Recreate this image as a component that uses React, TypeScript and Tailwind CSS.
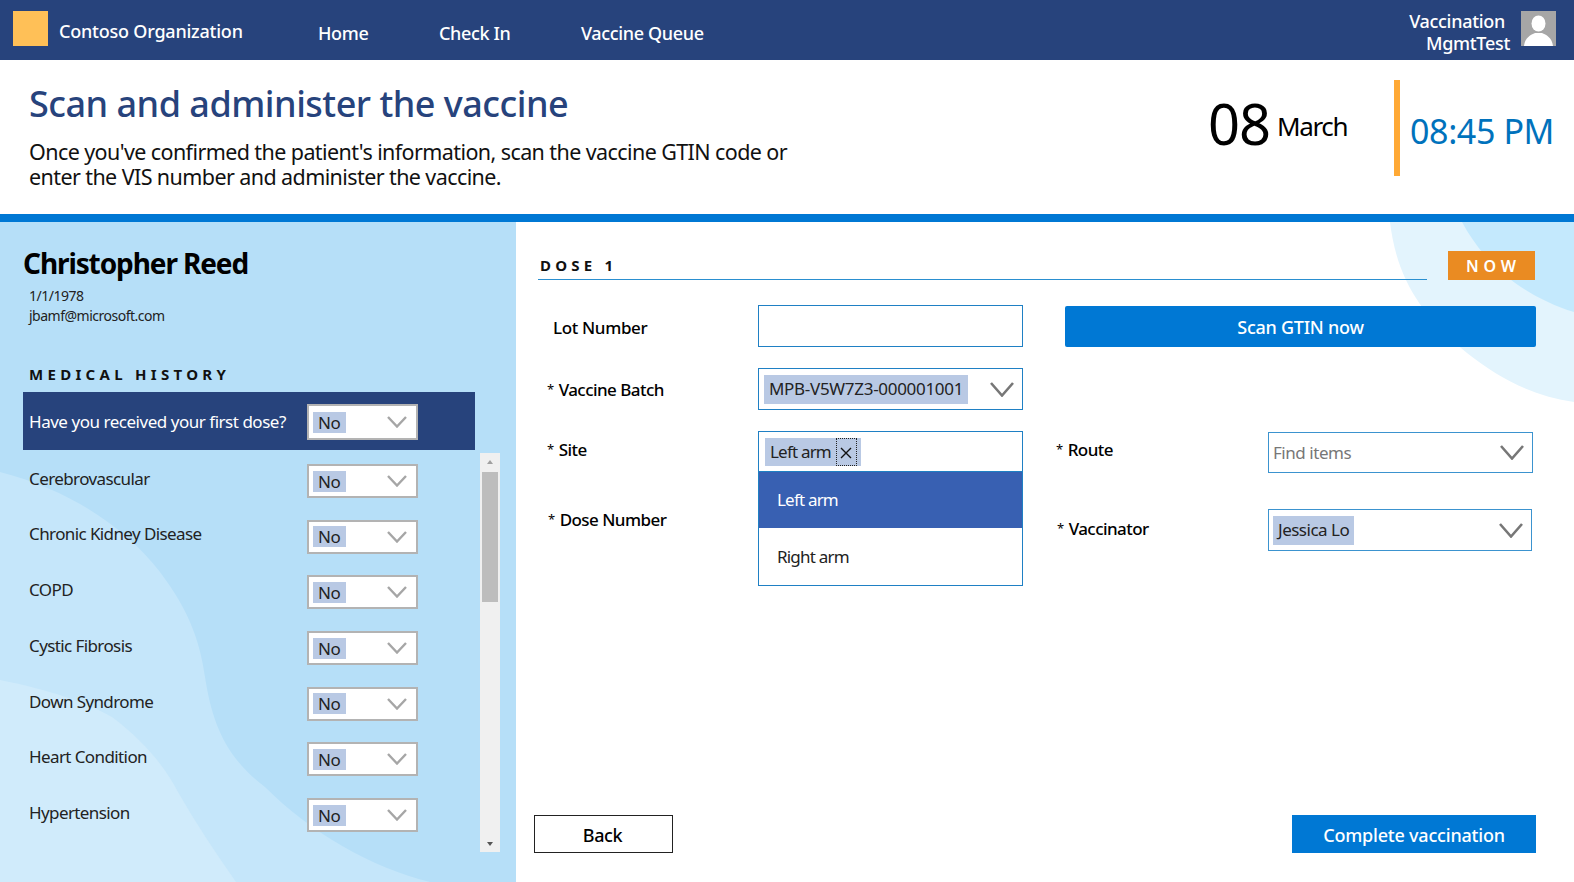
import React from "react";

function Chevron({ className = "", color = "#a6a6a6", w = 20, h = 12, sw = 2.4 }: { className?: string; color?: string; w?: number; h?: number; sw?: number }) {
  return (
    <svg className={className} width={w} height={h} viewBox={`0 0 ${w} ${h}`} fill="none">
      <polyline points={`1,1 ${w / 2},${h - 1.5} ${w - 1},1`} stroke={color} strokeWidth={sw} />
    </svg>
  );
}

function NoSelect({ rowH = "h-[34px]" }: { rowH?: string }) {
  return (
    <div className={`w-[111px] ${rowH} shrink-0 bg-white border-2 border-[#b3b3b3] flex items-center pl-[4px] pr-[9px] justify-between`}>
      <span className="bg-[#b9c9e4] h-[21px] w-[33px] pl-[5px] flex items-center text-[17px] text-[#222] leading-none tracking-[-0.3px]">No</span>
      <Chevron />
    </div>
  );
}

function Field({ label, className = "" }: { label: string; className?: string }) {
  return (
    <div className={`text-[17px] font-medium text-black leading-none tracking-[-0.55px] ${className}`}>
      <span className="text-[13px] font-normal relative -top-[2px] mr-[5px]">*</span>
      {label}
    </div>
  );
}

const rows = ["Cerebrovascular", "Chronic Kidney Disease", "COPD", "Cystic Fibrosis", "Down Syndrome", "Heart Condition", "Hypertension"];

export default function App() {
  return (
    <div className="w-full h-[882px] overflow-hidden flex flex-col bg-white text-black font-['Noto_Sans',sans-serif]">
      {/* top bar */}
      <header className="h-[60px] shrink-0 bg-[#27437c] flex items-center text-white">
        <div className="w-[35px] h-[35px] ml-[13px] -mt-[3px] bg-[#ffc057]" />
        <div className="ml-[11px] w-[259px] mt-[3px] text-[18px] font-medium tracking-[-0.22px]">Contoso Organization</div>
        <nav className="flex mt-[6px] text-[18px] font-medium tracking-[-0.35px]">
          <span className="w-[121px]">Home</span>
          <span className="w-[142px]">Check In</span>
          <span>Vaccine Queue</span>
        </nav>
        <div className="ml-auto mt-[4px] text-[18px] font-medium tracking-[-0.3px] leading-[22px] text-right">
          <div className="pr-[5px]">Vaccination</div>
          <div>MgmtTest</div>
        </div>
        <div className="w-[35px] h-[35px] ml-[11px] mr-[18px] -mt-[3px] bg-[#a6a6a6] overflow-hidden">
          <svg viewBox="0 0 35 35" width="35" height="35">
            <ellipse cx="17.5" cy="12.5" rx="7" ry="8" fill="#fff" />
            <path d="M3 35 C4 26 10 24 14 22 L21 22 C25 24 31 26 32 35 Z" fill="#fff" />
          </svg>
        </div>
      </header>

      {/* page heading */}
      <section className="h-[154px] shrink-0 flex">
        <div className="pl-[29px] w-[830px]">
          <h1 className="mt-[20px] h-[48px] text-[36px] leading-[48px] font-medium text-[#27437c] tracking-[-0.5px]">Scan and administer the vaccine</h1>
          <p className="mt-[11px] text-[21.5px] leading-[25px] tracking-[-0.59px] text-[#111]">
            Once you've confirmed the patient's information, scan the vaccine GTIN code or
            <br />
            enter the VIS number and administer the vaccine.
          </p>
        </div>
        <div className="ml-auto flex items-start mr-[20px]">
          <div className="flex items-center h-[96px] mt-[20px] -translate-y-[5px]">
            <span className="text-[56px] leading-none tracking-[-1px]">08</span>
            <span className="ml-[7px] mt-[5px] text-[26px] leading-none tracking-[-1.4px]">March</span>
          </div>
          <div className="w-[6px] h-[96px] mt-[20px] ml-[47px] bg-[#ffa935]" />
          <div className="ml-[10px] mt-[20px] h-[96px] flex items-center text-[34px] leading-none text-[#0072bc] tracking-[-0.4px] translate-y-[3px]">08:45 PM</div>
        </div>
      </section>

      <div className="h-[8px] shrink-0 bg-[#0078d4]" />

      {/* body */}
      <div className="flex-1 min-h-0 flex">
        <aside className="relative w-[516px] shrink-0 bg-[#b6dff8] pl-[23px] overflow-hidden">
          <svg className="absolute left-0 top-0" width="516" height="660" viewBox="0 0 516 660">
            <path d="M0 250 C70 268 125 305 160 350 C190 390 200 420 205 455 C212 500 225 535 265 565 C310 610 370 645 430 660 L0 660 Z" fill="#c5e6fa" />
            <path d="M0 458 C50 468 85 480 112 495 C145 520 165 545 178 570 C195 600 215 630 236 660 L0 660 Z" fill="#d0ebfb" />
          </svg>
          <div className="relative">
            <h2 className="mt-[22px] h-[38px] text-[28px] leading-[38px] font-bold tracking-[-1.1px]">Christopher Reed</h2>
            <div className="mt-[4px] pl-[6px] text-[14px] leading-[20px] tracking-[-0.5px] text-[#222]">
              <div>1/1/1978</div>
              <div>jbamf@microsoft.com</div>
            </div>
            <div className="mt-[38px] pl-[6px] h-[20px] text-[15px] leading-[20px] font-bold tracking-[4.3px] text-[#111]">MEDICAL HISTORY</div>
            <div className="mt-[8px] w-[452px] h-[58px] bg-[#27437c] flex items-center pl-[6px] pt-[2px]">
              <span className="w-[278px] text-[17px] text-white tracking-[-0.47px]">Have you received your first dose?</span>
              <NoSelect rowH="h-[36px]" />
            </div>
            <div className="flex mt-[3px]">
              <ul className="w-[457px] pt-[11px]">
                {rows.map((r) => (
                  <li key={r} className="h-[55.7px] flex pl-[6px]">
                    <span className="w-[278px] h-[29px] flex items-center text-[17px] text-[#222] tracking-[-0.6px]">{r}</span>
                    <NoSelect />
                  </li>
                ))}
              </ul>
              <div className="w-[20px] h-[399px] bg-[#f0f0f0] flex flex-col items-center pt-[7px] pb-[6px]">
                <div className="w-0 h-0 border-x-[3.5px] border-x-transparent border-b-[4px] border-b-[#a0a0a0]" />
                <div className="w-[16px] h-[130px] mt-[8px] bg-[#bdbdbd] mb-auto" />
                <div className="w-0 h-0 border-x-[3.5px] border-x-transparent border-t-[4px] border-t-[#555]" />
              </div>
            </div>
          </div>
        </aside>

        <main className="relative flex-1 min-w-0 flex flex-col overflow-hidden">
          <svg className="absolute left-0 top-0" width="1058" height="660" viewBox="0 0 1058 660">
            <path d="M874 0 C880 50 900 90 951 131 C985 158 1020 175 1058 180 L1058 0 Z" fill="#e3f4fd" />
            <path d="M946 0 C970 45 1010 75 1058 90 L1058 0 Z" fill="#c4e9fd" />
          </svg>
          <div className="relative flex-1 flex flex-col">
            <div className="mt-[29px] ml-[22px] mr-[39px] flex h-[29px]">
              <div className="w-[889px] h-[29px] border-b border-[#2a8fd0] pl-[2px] pt-[5px] text-[15px] leading-[18px] font-bold tracking-[4.2px] whitespace-pre text-[#111]">DOSE 1</div>
              <div className="ml-[21px] w-[87px] h-[29px] bg-[#ea8b22] text-white flex items-center justify-center text-[16px] font-semibold tracking-[0.3em] pl-[4px]">NOW</div>
            </div>

            <div className="mt-[25px] flex h-[42px] items-center">
              <div className="ml-[37px] w-[205px] mt-[2px] text-[17px] font-medium tracking-[-0.35px] leading-none">Lot Number</div>
              <div className="w-[265px] h-[42px] bg-white border border-[#1f80c4]" />
              <button className="ml-[42px] mt-[1px] w-[471px] h-[41px] rounded-[2px] bg-[#0078d4] text-white pt-[1px] text-[18px] font-medium tracking-[-0.25px]">Scan GTIN now</button>
            </div>

            <div className="mt-[21px] flex h-[42px] items-center">
              <Field label="Vaccine Batch" className="ml-[31px] w-[211px]" />
              <div className="w-[265px] h-[42px] bg-white border border-[#1f80c4] flex items-center justify-between pl-[5px] pr-[8px]">
                <span className="bg-[#b9c9e4] h-[29px] flex items-center px-[5px] text-[17px] tracking-[-0.3px] text-[#222]">MPB-V5W7Z3-000001001</span>
                <Chevron color="#777" w={24} h={15} sw={2.6} />
              </div>
            </div>

            <div className="mt-[21px] flex h-[41px] items-start">
              <Field label="Site" className="ml-[31px] w-[211px] mt-[10px]" />
              <div className="relative w-[265px] h-[41px] bg-white border border-[#1f80c4] flex items-center pl-[6px]">
                <span className="bg-[#b9c9e4] h-[28px] flex items-center pl-[5px] pr-[4px] text-[17px] tracking-[-0.8px] text-[#222]">
                  Left arm
                  <span className="ml-[5px] w-[21px] h-[28px] border border-dotted border-[#222] flex items-center justify-center">
                    <svg className="mt-[3px]" width="12" height="12" viewBox="0 0 12 12"><path d="M1 1 L11 11 M11 1 L1 11" stroke="#111" strokeWidth="1.4" /></svg>
                  </span>
                </span>
                <div className="absolute left-[-1px] top-[39px] w-[265px] h-[115px] bg-white border border-[#1f80c4] z-10">
                  <div className="h-[56px] bg-[#3860b2] text-white flex items-center pl-[18px] text-[17px] tracking-[-0.8px]">Left arm</div>
                  <div className="h-[57px] flex items-center pl-[18px] text-[17px] tracking-[-0.8px] text-[#222]">Right arm</div>
                </div>
              </div>
              <Field label="Route" className="ml-[33px] w-[212px] mt-[10px]" />
              <div className="w-[265px] h-[41px] mt-[1px] bg-white border border-[#3b93cf] flex items-center justify-between pl-[4px] pr-[8px]">
                <span className="text-[17px] tracking-[-0.45px] text-[#777]">Find items</span>
                <Chevron color="#777" w={24} h={15} sw={2.6} />
              </div>
            </div>

            <div className="mt-[37px] flex h-[42px] items-start">
              <Field label="Dose Number" className="ml-[32px] w-[210px] mt-[2px]" />
              <div className="w-[265px]" />
              <Field label="Vaccinator" className="ml-[34px] w-[211px] mt-[11px]" />
              <div className="w-[264px] h-[42px] bg-white border border-[#3b93cf] flex items-center justify-between pl-[4px] pr-[8px]">
                <span className="bg-[#b9c9e4] h-[29px] flex items-center px-[5px] text-[17px] tracking-[-0.5px] text-[#222]">Jessica Lo</span>
                <Chevron color="#777" w={24} h={15} sw={2.6} />
              </div>
            </div>

            <div className="mt-auto mb-[29px] ml-[18px] mr-[38px] flex justify-between">
              <button className="w-[139px] h-[38px] bg-white border border-[#222] pt-[2px] pr-[2px] text-[18px] font-medium tracking-[-0.4px]">Back</button>
              <button className="w-[244px] h-[38px] bg-[#0078d4] text-white pt-[2px] text-[18px] font-medium tracking-[-0.2px]">Complete vaccination</button>
            </div>
          </div>
        </main>
      </div>
    </div>
  );
}
